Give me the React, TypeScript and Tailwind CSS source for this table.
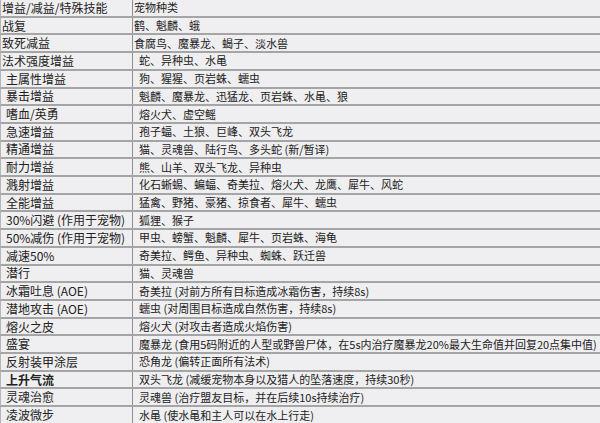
import React from "react";

type Row = { l: string; r: string; li?: boolean; ri?: boolean; bold?: boolean };

const rows: Row[] = [
  { l: "增益/减益/特殊技能", r: "宠物种类" },
  { l: "战复", r: "鹤、魁麟、蛾" },
  { l: "致死减益", r: "食腐鸟、魔暴龙、蝎子、淡水兽" },
  { l: "法术强度增益", r: "蛇、异种虫、水黾", ri: true },
  { l: "主属性增益", r: "狗、猩猩、页岩蛛、蠕虫", li: true, ri: true },
  { l: "暴击增益", r: "魁麟、魔暴龙、迅猛龙、页岩蛛、水黾、狼", li: true, ri: true },
  { l: "嗜血/英勇", r: "熔火犬、虚空鳐", li: true, ri: true },
  { l: "急速增益", r: "孢子蝠、土狼、巨峰、双头飞龙", li: true, ri: true },
  { l: "精通增益", r: "猫、灵魂兽、陆行鸟、多头蛇 (新/暂译)", li: true, ri: true },
  { l: "耐力增益", r: "熊、山羊、双头飞龙、异种虫", li: true, ri: true },
  { l: "溅射增益", r: "化石蜥蜴、蝙蝠、奇美拉、熔火犬、龙鹰、犀牛、风蛇", li: true, ri: true },
  { l: "全能增益", r: "猛禽、野猪、豪猪、掠食者、犀牛、蠕虫", li: true, ri: true },
  { l: "30%闪避 (作用于宠物)", r: "狐狸、猴子", li: true, ri: true },
  { l: "50%减伤 (作用于宠物)", r: "甲虫、螃蟹、魁麟、犀牛、页岩蛛、海龟", li: true, ri: true },
  { l: "减速50%", r: "奇美拉、鳄鱼、异种虫、蜘蛛、跃迁兽", li: true, ri: true },
  { l: "潜行", r: "猫、灵魂兽", li: true, ri: true },
  { l: "冰霜吐息 (AOE)", r: "奇美拉 (对前方所有目标造成冰霜伤害，持续8s)", li: true, ri: true },
  { l: "潜地攻击 (AOE)", r: "蠕虫 (对周围目标造成自然伤害，持续8s)", li: true, ri: true },
  { l: "熔火之皮", r: "熔火犬 (对攻击者造成火焰伤害)", li: true, ri: true },
  { l: "盛宴", r: "魔暴龙 (食用5码附近的人型或野兽尸体，在5s内治疗魔暴龙20%最大生命值并回复20点集中值)", li: true, ri: true },
  { l: "反射装甲涂层", r: "恐角龙 (偏转正面所有法术)", li: true, ri: true },
  { l: "上升气流", r: "双头飞龙 (减缓宠物本身以及猎人的坠落速度，持续30秒)", li: true, ri: true, bold: true },
  { l: "灵魂治愈", r: "灵魂兽 (治疗盟友目标，并在后续10s持续治疗)", li: true, ri: true },
  { l: "凌波微步", r: "水黾 (使水黾和主人可以在水上行走)", li: true, ri: true },
];

export default function App() {
  return (
    <div
      className="w-[600px] h-[423px] overflow-hidden bg-[#efeef0] text-[#222] leading-none flex flex-col"
      style={{ fontFamily: '"Noto Sans CJK SC", "Noto Sans", sans-serif' }}
    >
      {rows.map((row, i) => (
        <div
          key={i}
          className={
            "flex-1 flex items-center border-l border-[#b5b5b5] " +
            (i < rows.length - 1 ? "border-b-2 border-b-[#a5a5a5]" : "")
          }
        >
          <div
            className={
              "w-[132px] h-full flex items-center border-r border-[#8f8f8f] whitespace-nowrap overflow-hidden text-[12px] " +
              (row.li ? "pl-[5px] " : "pl-[1px] ") +
              (row.bold ? "font-bold" : "")
            }
          >
            {row.l}
          </div>
          <div
            className={
              "flex-1 h-full flex items-center whitespace-nowrap overflow-hidden text-[11px] " +
              (row.ri ? "pl-[6px]" : "pl-[1px]")
            }
          >
            {row.r}
          </div>
        </div>
      ))}
    </div>
  );
}
